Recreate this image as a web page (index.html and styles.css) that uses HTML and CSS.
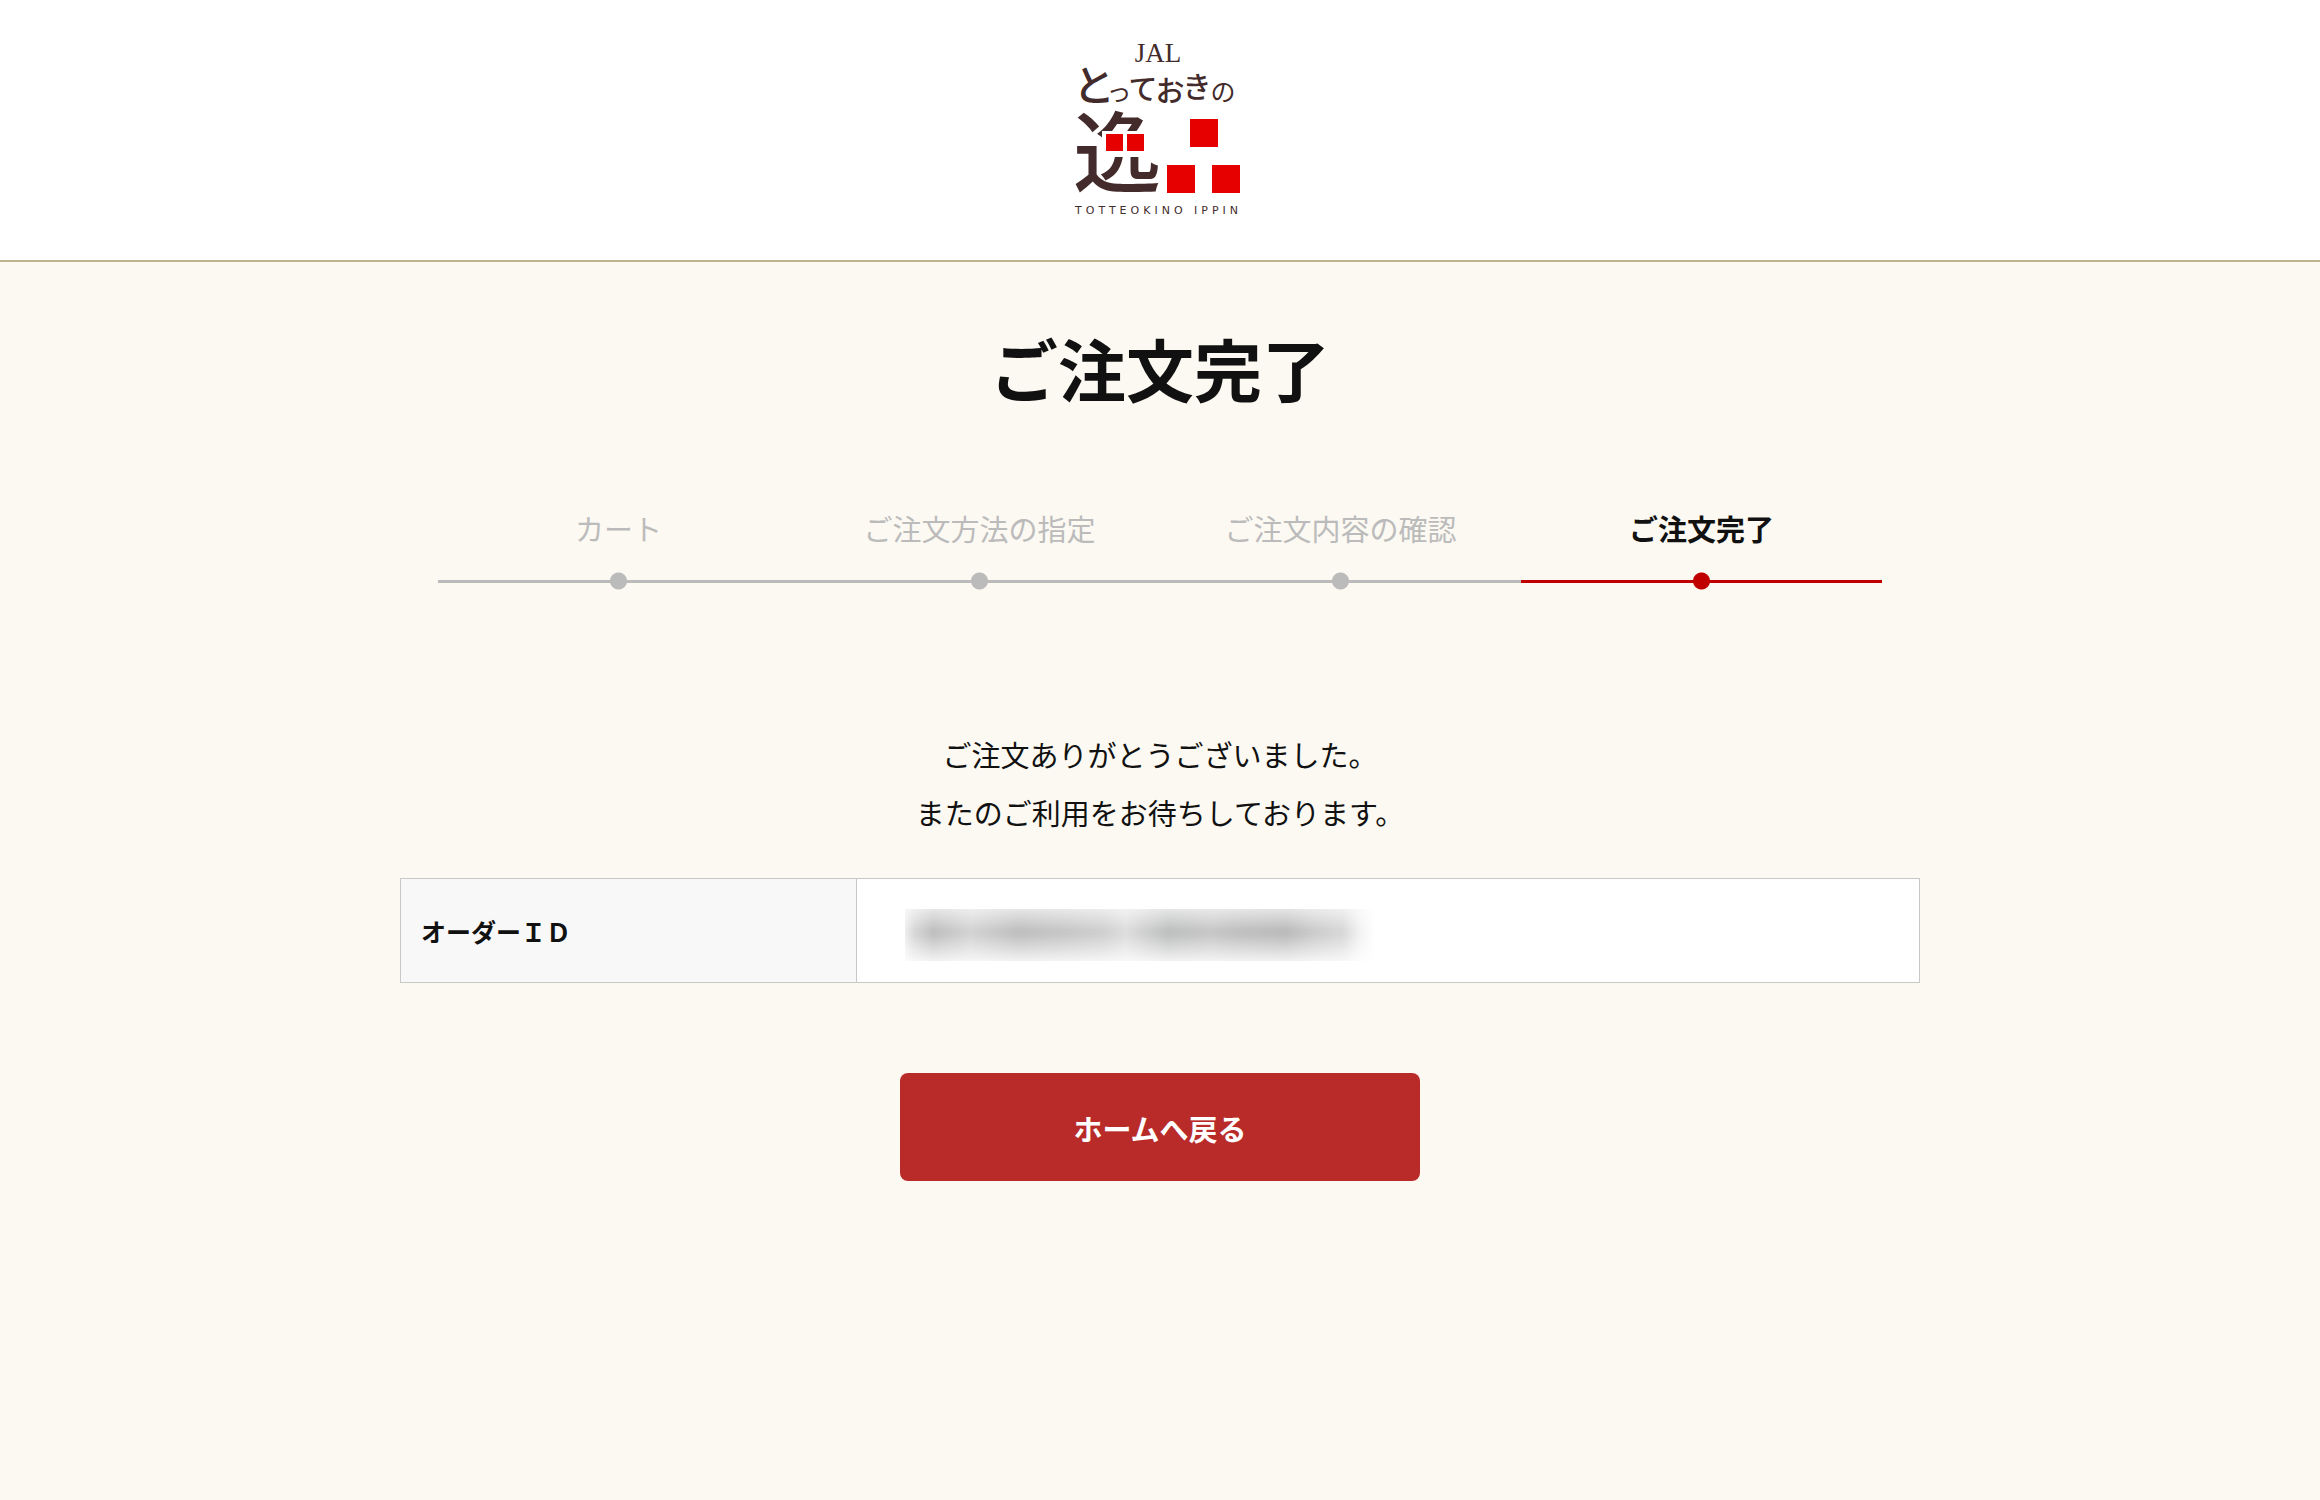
FILE: index.html
```html
<!DOCTYPE html>
<html lang="ja">
<head>
  <meta charset="UTF-8" />
  <meta name="viewport" content="width=device-width, initial-scale=1" />
  <title>ご注文完了</title>
  <link rel="stylesheet" href="styles.css">
</head>
<body>

  <header class="header">
    <svg class="logo" viewBox="0 0 240 240" role="img" aria-label="JAL とっておきの逸品">
      <text class="logo-jal" x="118" y="42">JAL</text>
      <g class="logo-kana">
        <text class="kana-l" x="54" y="81">と</text>
        <text class="kana-s" x="79" y="81">っ</text>
        <text class="kana-m" x="103" y="80">て</text>
        <text class="kana-m" x="130" y="82">お</text>
        <text class="kana-m" x="157" y="78">き</text>
        <text class="kana-s" x="183" y="81">の</text>
      </g>
      <text class="logo-kanji" x="77" y="165">逸</text>
      <rect fill="#fff" x="62" y="111" width="54" height="26" />
      <g fill="#e60000">
        <rect x="66" y="114" width="17" height="17" />
        <rect x="87" y="114" width="17" height="17" />
        <rect x="150" y="99" width="28" height="28" />
        <rect x="127" y="145" width="28" height="28" />
        <rect x="172" y="145" width="28" height="28" />
      </g>
      <text class="logo-roman" x="35" y="194">TOTTEOKINO IPPIN</text>
    </svg>
  </header>

  <main class="container">
    <h1>ご注文完了</h1>

    <ol class="steps">
      <li>カート</li>
      <li>ご注文方法の指定</li>
      <li>ご注文内容の確認</li>
      <li class="current" aria-current="step">ご注文完了</li>
    </ol>

    <p class="message">ご注文ありがとうございました。<br>またのご利用をお待ちしております。</p>

    <table class="order">
      <tr>
        <th scope="row">オーダーＩＤ</th>
        <td><div class="masked"></div></td>
      </tr>
    </table>

    <button type="button" class="btn-home">ホームへ戻る</button>
  </main>

</body>
</html>
```

FILE: styles.css
```css
* {
  box-sizing: border-box;
}

body {
  margin: 0;
  background: #fcf9f2;
  color: #111;
  font-family: "Noto Sans CJK JP", sans-serif;
  font-size: 29px;
}

/* header */
.header {
  padding-top: 20px;
  background: #fff;
  border-bottom: 2px solid #beb48f;
  text-align: center;
}

.logo {
  display: block;
  width: 240px;
  height: 240px;
  margin: 0 auto;
  fill: #432b2b;
}

.logo text {
  text-anchor: middle;
}

.logo .logo-jal {
  font-family: "Liberation Serif", serif;
  font-size: 27px;
}

.kana-l {
  font-size: 42px;
  font-weight: 500;
}

.kana-m {
  font-size: 29px;
  font-weight: 500;
}

.kana-s {
  font-size: 25px;
}

.logo-kanji {
  font-size: 88px;
  font-weight: 500;
}

.logo .logo-roman {
  font-family: "DejaVu Sans", sans-serif;
  font-size: 11px;
  letter-spacing: 4px;
  text-anchor: start;
}

/* contents */
.container {
  max-width: 1520px;
  margin: 0 auto;
  padding: 56px 0 80px;
}

h1 {
  margin: 0;
  font-size: 68px;
  font-weight: 700;
  line-height: 100px;
  text-align: center;
}

/* order steps */
.steps {
  display: flex;
  width: 95%;
  margin: 81px auto 0;
  padding: 0;
  list-style: none;
}

.steps li {
  flex: 1;
  color: #bbb;
  line-height: 58px;
  text-align: center;
}

.steps li::after {
  content: "";
  display: block;
  height: 18px;
  margin-top: 15px;
  background:
    radial-gradient(circle, currentColor 8px, transparent 9px),
    linear-gradient(currentColor, currentColor) center / 100% 3px no-repeat;
}

.steps .current {
  color: #111;
  font-weight: 700;
}

.steps .current::after {
  color: #c00000;
}

.message {
  margin: 135px 0 37px;
  line-height: 58px;
  text-align: center;
}

/* order id */
.order {
  width: 100%;
  border-collapse: collapse;
  background: #fff;
}

.order th,
.order td {
  height: 104px;
  border: 1px solid #c8c8c8;
  text-align: left;
}

.order th {
  width: 30%;
  padding: 0 20px;
  background: #f8f8f8;
  font-size: 25px;
  font-weight: 700;
}

.order td {
  padding: 8px 48px 0;
}

.masked {
  max-width: 470px;
  height: 52px;
  background:
    linear-gradient(rgba(255, 255, 255, 0.6), rgba(255, 255, 255, 0) 40%, rgba(255, 255, 255, 0) 50%, rgba(255, 255, 255, 0.8)),
    linear-gradient(to right, #eee, #d8d8d8 2%, #c0c0c0 6%, #d4d4d4 14%, #c0c0c0 24%, #c8c8c8 34%, #d0d0d0 42%, #dedede 47%, #bfc0c0 56%, #c8c8c8 65%, #c2c2c2 70%, #bcbcbc 81%, #cdcdcd 87%, #d8d8d8 93%, #f4f4f4 97%, #fff);
}

.btn-home {
  display: block;
  width: 100%;
  max-width: 520px;
  margin: 90px auto 0;
  padding: 31px 20px 29px;
  border: none;
  border-radius: 8px;
  background: #b92b29;
  color: #fff;
  font-family: inherit;
  font-size: 29px;
  font-weight: 700;
  line-height: 48px;
  cursor: pointer;
}

.btn-home:hover {
  opacity: 0.8;
}
```
